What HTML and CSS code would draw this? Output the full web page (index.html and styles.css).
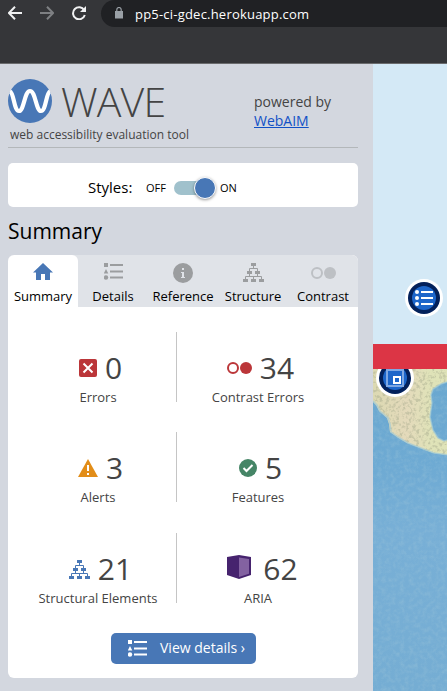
FILE: index.html
```html
<!DOCTYPE html>
<html lang="en">
<head>
<meta charset="utf-8">
<title>WAVE report</title>
<link rel="stylesheet" href="styles.css">
</head>
<body>
<svg class="defs" aria-hidden="true">
  <symbol id="list" viewBox="0 0 19 17"><path d="M0 0h4v4H0zM6 1h13v2H6zM2 6l2.3 4.5h-4.600zM6 7.500h13v2H6zM6 13.500h13v2H6z"/><circle cx="2" cy="14.500" r="2.200"/></symbol>
  <symbol id="tree" viewBox="0 0 21 19"><path d="M8 0h5v3H8zM4 8h5v3H4zM12 8h5v3h-5zM0 16h5v3H0zM8 16h5v3H8zM16 16h5v3h-5z"/><path d="M10.500 3v2.500M6.500 8V5.500h8V8M6.500 11v2.500M14.500 11v2.500M2.500 16v-2.500h16V16M10.500 13.500V16" fill="none" stroke="currentColor"/></symbol>
  <symbol id="contrast" viewBox="0 0 25 12"><circle cx="6" cy="6" r="5" fill="none" stroke="currentColor" stroke-width="2"/><circle cx="19" cy="6" r="6"/></symbol>
</svg>
<header class="browser">
  <nav class="nav">
    <svg width="14" height="14" viewBox="0 0 14 14"><path d="M14 7H1.500M7 .8.900 7 7 13.200"/></svg>
    <svg class="muted" width="14" height="14" viewBox="0 0 14 14"><path d="M0 7h12.500M7 .8 13.100 7 7 13.200"/></svg>
    <svg width="14" height="14" viewBox="0 0 14 14"><path d="M12.200 4.200A6 6 0 1 0 12.800 9"/><path class="tip" d="M14 0v6H8z"/></svg>
  </nav>
  <div class="address">
    <svg width="8" height="12" viewBox="0 0 8 12"><path d="M0 4h8v7.500H0z"/><path d="M1.800 4V2.700a2.200 2.200 0 0 1 4.400 0V4" fill="none" stroke="#9aa0a6" stroke-width="1.200"/></svg>
    <span>pp5-ci-gdec.herokuapp.com</span>
  </div>
</header>
<main class="view">
  <aside class="panel">
    <div class="brand">
      <div class="logo">
        <div class="mark">
          <svg width="44" height="44" viewBox="0 0 44 44"><circle cx="22" cy="22" r="22" fill="#4877b6"/><path d="M2 12.500C6 14 6 32 11 32S16.500 12 22 12s6 20 11 20 5-18 9-19.500" fill="none" stroke="#fff" stroke-width="4.200"/></svg>
          <span class="wave">WAVE</span>
        </div>
        <div class="tagline">web accessibility evaluation tool</div>
      </div>
      <div class="powered">powered by<br><a href="#">WebAIM</a></div>
    </div>
    <div class="styles"><span class="label">Styles:</span><span class="off">OFF</span><span class="switch"><i></i></span><span class="on">ON</span></div>
    <h2>Summary</h2>
    <section class="card">
      <div class="tabs">
        <div class="tab active"><svg width="20" height="20" viewBox="0 0 20 20"><path d="M10 0 0 9.500h3V17h5v-6h4v6h5V9.500h3z"/></svg><span>Summary</span></div>
        <div class="tab"><svg width="19" height="17"><use href="#list"/></svg><span>Details</span></div>
        <div class="tab"><svg width="20" height="20" viewBox="0 0 20 20"><circle cx="10" cy="10" r="10"/><path d="M9 5h2v2H9zM8 9h3v5h1v1H8v-1h1v-4H8z" fill="#e0e3e8"/></svg><span>Reference</span></div>
        <div class="tab"><svg width="21" height="19"><use href="#tree"/></svg><span>Structure</span></div>
        <div class="tab faint"><svg width="25" height="12"><use href="#contrast"/></svg><span>Contrast</span></div>
      </div>
      <div class="stats">
        <div class="stat"><div class="num"><svg class="red" width="18" height="18" viewBox="0 0 18 18"><rect width="18" height="18" rx="2"/><path d="m4.500 4.500 9 9m0-9-9 9" stroke="#fff" stroke-width="2"/></svg><b>0</b></div><span>Errors</span></div>
        <div class="stat"><div class="num"><svg class="red" width="25" height="12"><use href="#contrast"/></svg><b>34</b></div><span>Contrast Errors</span></div>
        <div class="stat"><div class="num"><svg class="orange" width="20" height="18" viewBox="0 0 20 18"><path d="m10 0 10 18H0z"/><path d="M9 6h2v6H9zM9 14h2v2H9z" fill="#fff"/></svg><b>3</b></div><span>Alerts</span></div>
        <div class="stat"><div class="num"><svg class="green" width="18" height="18" viewBox="0 0 18 18"><circle cx="9" cy="9" r="9"/><path d="m4.500 9 3 3 6-6" fill="none" stroke="#fff" stroke-width="2"/></svg><b>5</b></div><span>Features</span></div>
        <div class="stat"><div class="num"><svg class="blue" width="21" height="19"><use href="#tree"/></svg><b>21</b></div><span>Structural Elements</span></div>
        <div class="stat"><div class="num aria"><svg width="24" height="24" viewBox="0 0 24 24"><path d="m0 2 12-2 12 2v18l-12 4L0 20z" fill="#46236e"/><path d="m12 2.500 10 1.500v14.800L12 22z" fill="#8362a1"/></svg><b>62</b></div><span>ARIA</span></div>
      </div>
      <a class="button" href="#"><svg width="19" height="17"><use href="#list"/></svg><span>View details ›</span></a>
    </section>
  </aside>
  <div class="site">
    <div class="sky"></div>
    <div class="redbar"></div>
    <svg class="map" width="74" height="322" viewBox="0 0 74 322">
      <defs>
        <filter id="water" x="0" y="0" width="1" height="1"><feTurbulence type="fractalNoise" baseFrequency=".22" numOctaves="3" seed="4"/><feColorMatrix values="0 0 0 0 .35  0 0 0 0 .57  0 0 0 0 .7  1.800 0 0 0 -.72"/></filter>
        <filter id="relief" x="0" y="0" width="1" height="1"><feTurbulence type="fractalNoise" baseFrequency=".3" numOctaves="3" seed="9"/><feColorMatrix values="0 0 0 0 .4  0 0 0 0 .42  0 0 0 0 .28  4 0 0 0 -1.900"/></filter>
        <linearGradient id="sea" x1="0" y1="0" x2="0" y2="1"><stop offset="0" stop-color="#69a7cf"/><stop offset=".3" stop-color="#6eaad3"/><stop offset=".5" stop-color="#78afd6"/><stop offset="1" stop-color="#75add3"/></linearGradient>
        <linearGradient id="land" x1="0" x2="1"><stop offset="0" stop-color="#dcd9b2"/><stop offset=".45" stop-color="#e4dabb"/><stop offset=".8" stop-color="#dfe3b8"/></linearGradient>
        <clipPath id="coast"><path d="M0 0h74v13l-6 2-8 5-2 6 1 8-2 14 3 13 5 8 6 3 3-1v15l-14-2-13-5-13-5-10-6-7-5-1-8-2-6-8-7-3-6-4-4z"/></clipPath>
      </defs>
      <rect width="74" height="322" fill="url(#sea)"/>
      <rect width="74" height="322" filter="url(#water)" opacity=".4"/>
      <g clip-path="url(#coast)"><rect width="74" height="90" fill="url(#land)"/><rect width="74" height="90" filter="url(#relief)" opacity=".5"/></g>
      <g fill="none" stroke="#a2cbd6" stroke-width="1.500" opacity=".7"><path d="m0 32 4 4 3 6 8 7 2 6 1 8 7 5 10 6 13 5 13 5 14 2M74 13l-6 2-8 5-2 6 1 8-2 14 3 13 5 8 6 3 3-1"/></g>
      <circle cx="22" cy="9" r="19" fill="#fff"/><circle cx="22" cy="9" r="16" fill="#03215b"/><circle cx="22" cy="9" r="12" fill="#1d66ca"/><path d="M14 1h16v16H14z" fill="none" stroke="#7fa8e3" stroke-width="2"/><path d="M21 8h6v6h-6z" fill="#1d66ca" stroke="#fff" stroke-width="2"/>
    </svg>
    <svg class="pin" width="38" height="38" viewBox="0 0 38 38"><circle cx="19" cy="19" r="19" fill="#fff"/><circle cx="19" cy="19" r="16" fill="#03215b"/><circle cx="19" cy="19" r="12" fill="#1d66ca"/><g fill="#fff"><circle cx="12" cy="13" r="2"/><circle cx="12" cy="19" r="2"/><circle cx="12" cy="25" r="2"/><path d="M16 12h12v2H16zM16 18h12v2H16zM16 24h12v2H16z"/></g></svg>
  </div>
</main>
</body>
</html>
```

FILE: styles.css
```css
* { box-sizing: border-box; }
body { margin: 0; width: 447px; height: 691px; overflow: hidden; font: 13px/18px "Open Sans", "Noto Sans", sans-serif; color: #000; background: #d3d7df; }
svg { display: block; flex: none; fill: currentColor; }
.defs { position: absolute; width: 0; height: 0; }
.browser { height: 64px; display: flex; background: #353639; border-bottom: 1px solid #6a6b6d; }
.nav { width: 101px; display: flex; gap: 18px; padding: 6px 0 0 8px; color: #f0f1f2; }
.nav svg { fill: none; stroke: currentColor; stroke-width: 2; }
.nav .muted { color: #7e8083; }
.nav .tip { fill: currentColor; stroke: none; }
.address { flex: 1; height: 27px; display: flex; gap: 12px; padding: 7px 0 0 14px; background: #202124; border-radius: 14px 0 0 14px; color: #9aa0a6; }
.address span { color: #fff; font-size: 13px; line-height: 14px; letter-spacing: .21px; white-space: nowrap; }
.view { display: flex; height: 627px; }
.panel { width: 373px; padding: 0 15px 0 8px; }
.brand { height: 84px; display: flex; justify-content: space-between; border-bottom: 1px solid #b3b7ba; }
.logo { padding-top: 15px; }
.mark { display: flex; height: 44px; gap: 9px; }
.wave { font-size: 41px; line-height: 45px; font-weight: 300; letter-spacing: -.8px; color: #444; }
.tagline { padding: 3px 0 0 2px; font-size: 12px; color: #444; white-space: nowrap; }
.powered { width: 104px; padding-top: 28px; font-size: 14px; line-height: 19px; color: #444; }
.powered a { color: #1151c6; }
.styles { height: 44px; margin-top: 15px; border-radius: 5px; background: #fff; display: flex; align-items: center; padding: 5px 0 0 80px; font-size: 11px; }
.label { width: 58px; font-size: 15px; margin-top: -2px; }
.off { width: 28px; }
.switch { width: 40px; height: 14px; border-radius: 7px; background: #a0c1cc; position: relative; }
.switch i { position: absolute; left: 20px; top: -4px; width: 22px; height: 22px; border-radius: 50%; background: #4877b6; border: 1px solid #fff; box-shadow: 0 1px 3px #0006; }
.on { margin-left: 6px; }
h2 { margin: 8px 0 0; height: 40px; font-size: 21px; line-height: 33px; font-weight: 400; }
.card { height: 423px; border-radius: 6px; background: #fff; overflow: hidden; }
.tabs { height: 52px; display: grid; grid-template-columns: repeat(5, 70px); background: #e0e3e8; }
.tab { display: flex; flex-direction: column; align-items: center; justify-content: space-between; color: #9b9d9f; padding-top: 8px; }
.tab span { color: #000; line-height: 18px; padding-bottom: 2px; }
.tab.active { background: #fff; border-radius: 6px 6px 0 0; color: #4877b6; }
.tab.faint { color: #bdc0c4; padding-top: 12px; }
.stats { padding-top: 25px; display: grid; grid-template-columns: 169px 181px; grid-template-rows: 100px 101px 77px; color: #444; }
.stat { height: 70px; padding: 18px 0 0 12px; display: flex; flex-direction: column; align-items: center; white-space: nowrap; }
.stat:nth-child(odd) { border-right: 1px solid #c5c5c5; }
.stat:nth-child(even) { padding-left: 0; padding-right: 19px; }
.stat > span { margin-top: 2px; }
.num { height: 36px; display: flex; align-items: center; gap: 8px; padding-left: 5px; }
.num b { font-weight: 400; font-size: 30px; line-height: 36px; }
.num.aria { gap: 12px; padding-left: 9px; }
.num.aria svg { margin-top: -4px; }
.red { color: #bb3639; }
.orange { color: #e28d18; }
.green { color: #458566; }
.blue { color: #4877b6; }
.button { width: 145px; height: 31px; margin: 23px auto 0 103px; display: flex; align-items: center; gap: 13px; padding-left: 17px; border-radius: 5px; color: #fff; background: #4877b6; text-decoration: none; font-size: 14px; white-space: nowrap; }
.button span { margin-top: -1px; }
.site { width: 74px; height: 627px; position: relative; overflow: hidden; }
.sky { height: 280px; background: #d4e9f6; }
.redbar { height: 25px; background: #dc3545; }
.pin { position: absolute; left: 32px; top: 215px; }
```
